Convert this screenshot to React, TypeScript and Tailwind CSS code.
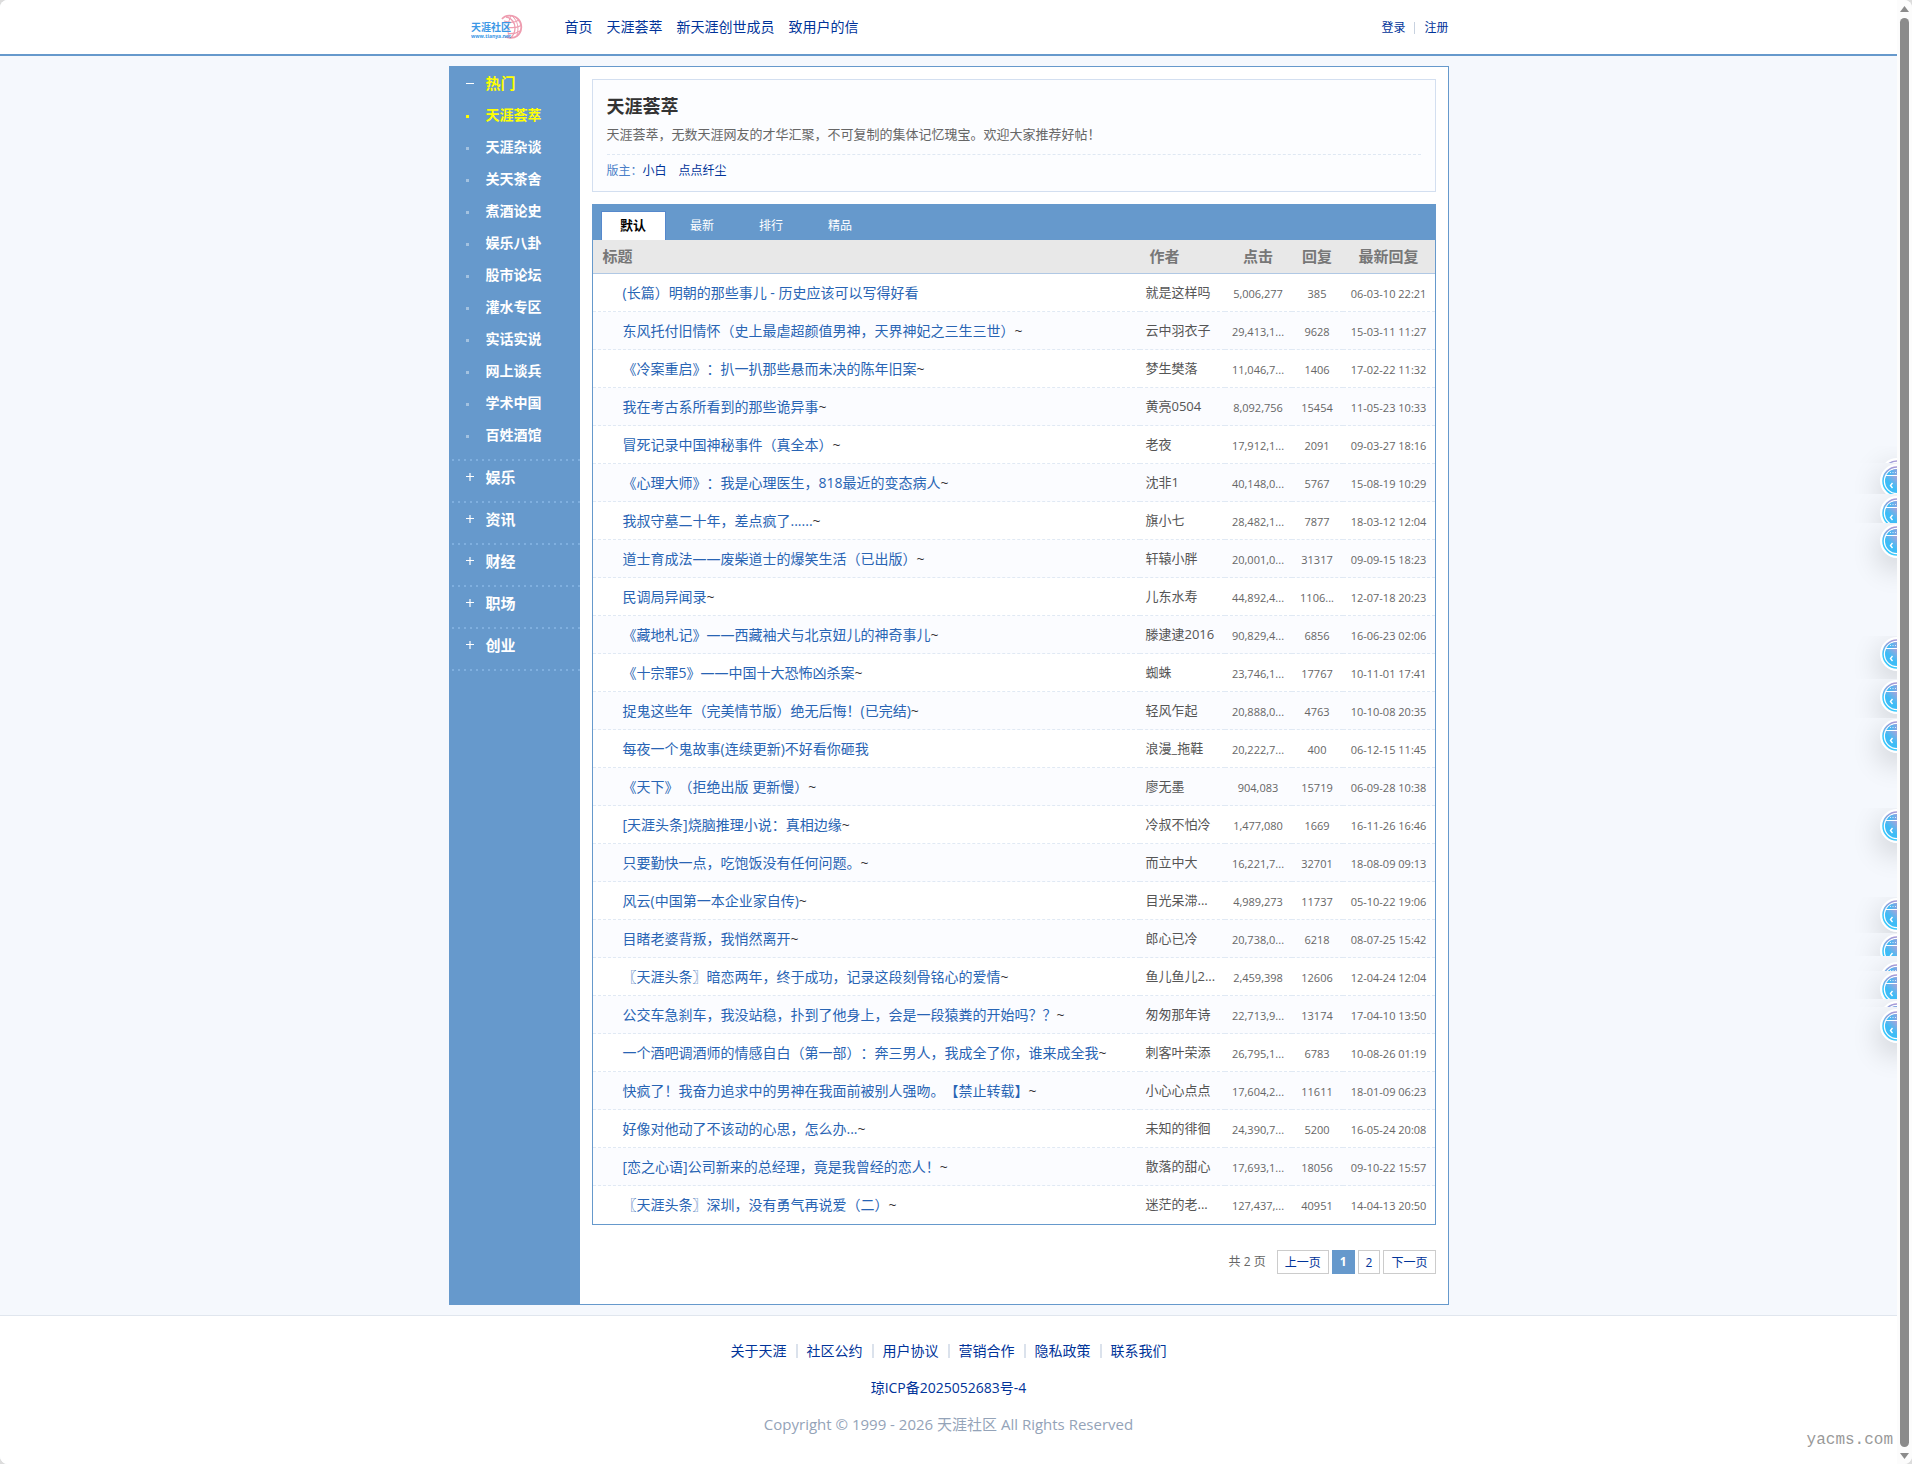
import clsx from "clsx";

interface Topic {
  title: string;
  author: string;
  clicks: string;
  replies: string;
  date: string;
  original?: boolean;
}

const NAV_LINKS = ["首页", "天涯荟萃", "新天涯创世成员", "致用户的信"];

const HOT_BOARDS = [
  "天涯荟萃",
  "天涯杂谈",
  "关天茶舍",
  "煮酒论史",
  "娱乐八卦",
  "股市论坛",
  "灌水专区",
  "实话实说",
  "网上谈兵",
  "学术中国",
  "百姓酒馆",
];

const CLOSED_GROUPS = ["娱乐", "资讯", "财经", "职场", "创业"];

const TABS = ["默认", "最新", "排行", "精品"];

const FOOTER_LINKS = [
  "关于天涯",
  "社区公约",
  "用户协议",
  "营销合作",
  "隐私政策",
  "联系我们",
];

// Titles flagged as original have no tilde after the link
const TOPICS: Topic[] = [
  { title: "(长篇）明朝的那些事儿 - 历史应该可以写得好看", author: "就是这样吗", clicks: "5,006,277", replies: "385", date: "06-03-10 22:21", original: true },
  { title: "东风托付旧情怀（史上最虐超颜值男神，天界神妃之三生三世）", author: "云中羽衣子", clicks: "29,413,1...", replies: "9628", date: "15-03-11 11:27" },
  { title: "《冷案重启》：扒一扒那些悬而未决的陈年旧案", author: "梦生樊落", clicks: "11,046,7...", replies: "1406", date: "17-02-22 11:32" },
  { title: "我在考古系所看到的那些诡异事", author: "黄亮0504", clicks: "8,092,756", replies: "15454", date: "11-05-23 10:33" },
  { title: "冒死记录中国神秘事件（真全本）", author: "老夜", clicks: "17,912,1...", replies: "2091", date: "09-03-27 18:16" },
  { title: "《心理大师》：我是心理医生，818最近的变态病人", author: "沈非1", clicks: "40,148,0...", replies: "5767", date: "15-08-19 10:29" },
  { title: "我叔守墓二十年，差点疯了......", author: "旗小七", clicks: "28,482,1...", replies: "7877", date: "18-03-12 12:04" },
  { title: "道士育成法——废柴道士的爆笑生活（已出版）", author: "轩辕小胖", clicks: "20,001,0...", replies: "31317", date: "09-09-15 18:23" },
  { title: "民调局异闻录", author: "儿东水寿", clicks: "44,892,4...", replies: "1106...", date: "12-07-18 20:23" },
  { title: "《藏地札记》——西藏袖犬与北京妞儿的神奇事儿", author: "滕逮逮2016", clicks: "90,829,4...", replies: "6856", date: "16-06-23 02:06" },
  { title: "《十宗罪5》——中国十大恐怖凶杀案", author: "蜘蛛", clicks: "23,746,1...", replies: "17767", date: "10-11-01 17:41" },
  { title: "捉鬼这些年（完美情节版）绝无后悔！(已完结)", author: "轻风乍起", clicks: "20,888,0...", replies: "4763", date: "10-10-08 20:35" },
  { title: "每夜一个鬼故事(连续更新)不好看你砸我", author: "浪漫_拖鞋", clicks: "20,222,7...", replies: "400", date: "06-12-15 11:45", original: true },
  { title: "《天下》（拒绝出版 更新慢）", author: "廖无墨", clicks: "904,083", replies: "15719", date: "06-09-28 10:38" },
  { title: "[天涯头条]烧脑推理小说：真相边缘", author: "冷叔不怕冷", clicks: "1,477,080", replies: "1669", date: "16-11-26 16:46" },
  { title: "只要勤快一点，吃饱饭没有任何问题。", author: "而立中大", clicks: "16,221,7...", replies: "32701", date: "18-08-09 09:13" },
  { title: "风云(中国第一本企业家自传)", author: "目光呆滞...", clicks: "4,989,273", replies: "11737", date: "05-10-22 19:06" },
  { title: "目睹老婆背叛，我悄然离开", author: "郎心已冷", clicks: "20,738,0...", replies: "6218", date: "08-07-25 15:42" },
  { title: "〖天涯头条〗暗恋两年，终于成功，记录这段刻骨铭心的爱情", author: "鱼儿鱼儿2...", clicks: "2,459,398", replies: "12606", date: "12-04-24 12:04" },
  { title: "公交车急刹车，我没站稳，扑到了他身上，会是一段猿粪的开始吗？？", author: "匆匆那年诗", clicks: "22,713,9...", replies: "13174", date: "17-04-10 13:50" },
  { title: "一个酒吧调酒师的情感自白（第一部）：奔三男人，我成全了你，谁来成全我", author: "刺客叶荣添", clicks: "26,795,1...", replies: "6783", date: "10-08-26 01:19" },
  { title: "快疯了！我奋力追求中的男神在我面前被别人强吻。【禁止转载】", author: "小心心点点", clicks: "17,604,2...", replies: "11611", date: "18-01-09 06:23" },
  { title: "好像对他动了不该动的心思，怎么办...", author: "未知的徘徊", clicks: "24,390,7...", replies: "5200", date: "16-05-24 20:08" },
  { title: "[恋之心语]公司新来的总经理，竟是我曾经的恋人！", author: "散落的甜心", clicks: "17,693,1...", replies: "18056", date: "09-10-22 15:57" },
  { title: "〖天涯头条〗深圳，没有勇气再说爱（二）", author: "迷茫的老...", clicks: "127,437,...", replies: "40951", date: "14-04-13 20:50" },
];

// top / height: visible slice of the badge, offset: where the circle starts in it
const BADGES = [
  { top: 446, height: 17, offset: 12 },
  { top: 463, height: 31, offset: 1 },
  { top: 494, height: 29, offset: 2 },
  { top: 523, height: 90, offset: 1 },
  { top: 636, height: 43, offset: 1 },
  { top: 679, height: 39, offset: 1 },
  { top: 718, height: 90, offset: 1 },
  { top: 808, height: 89, offset: 1 },
  { top: 897, height: 36, offset: 1 },
  { top: 933, height: 23, offset: 1 },
  { top: 956, height: 15, offset: 6 },
  { top: 971, height: 28, offset: 1 },
  { top: 999, height: 8, offset: 2 },
  { top: 1007, height: 90, offset: 2 },
];

const Logo = () => (
  <svg width="52" height="26" viewBox="0 0 52 26" role="img" aria-label="天涯社区">
    <g fill="none" stroke="#ee9db0">
      <path d="M31 5C34 1 42 0 47 5C52 10 51 18 46 22C43 24.500 38 24 34 23" strokeWidth="1.800" />
      <path d="M35 3C41 4 44 9 44 14C44 18 42 22 39 24" strokeWidth="1.300" />
      <path d="M41 2C47 7 48 14 46 21" strokeWidth="1" />
      <path d="M33 7C39 9 45 8 48 6" strokeWidth="1.200" />
      <path d="M38 13.500C43 14 47 13.500 50 11.500" strokeWidth="1.200" />
      <path d="M37 19.500C42 20 46 19 49 17" strokeWidth="1.200" />
      <path d="M40 1.500C37 8 36 16 38 23" strokeWidth="1" />
    </g>
    <text x="0" y="17" fontSize="10" fontWeight="700" fill="#3b98e6">
      天涯社区
    </text>
    <text x="0" y="24" fontSize="5" fontWeight="700" fill="#3b98e6">
      www.tianya.net
    </text>
  </svg>
);

const BadgeIcon = () => (
  <svg width="34" height="34" viewBox="0 0 34 34" className="rounded-full shadow-[0_10px_30px_rgba(0,0,0,0.2)]">
    <defs>
      <linearGradient id="badge-fill" x1="0" y1="1" x2="1" y2="0">
        <stop offset="0.300" stopColor="#3dbcf6" />
        <stop offset="0.700" stopColor="#cf9bd0" />
      </linearGradient>
      <linearGradient id="badge-top" x1="0" y1="0" x2="1" y2="0">
        <stop offset="0.100" stopColor="#3dbcf6" />
        <stop offset="0.600" stopColor="#9a9fdc" />
      </linearGradient>
      <linearGradient id="badge-ring" x1="0" y1="1" x2="0" y2="0">
        <stop offset="0.500" stopColor="#3cc8fb" />
        <stop offset="1" stopColor="#a99ad6" />
      </linearGradient>
    </defs>
    <circle cx="17" cy="17" r="17" fill="#fff" />
    <circle cx="17" cy="17" r="14" fill="none" stroke="url(#badge-ring)" strokeWidth="1.500" />
    <circle cx="17" cy="17" r="12" fill="url(#badge-fill)" />
    <path d="M6.400 11.500A12 12 0 0 1 27.600 11.500Z" fill="url(#badge-top)" />
    <path d="M6 11.500H28" stroke="#fff" strokeWidth="1.200" />
    <path d="M10 8.500h1M12.500 8.500h1M15 8.500h1" stroke="#d7ecfb" />
    <path d="M12.500 19L10.500 21.500L12.500 24" fill="none" stroke="#fff" strokeWidth="1.400" />
  </svg>
);

const Header = () => (
  <header className="border-b-2 border-[#6699cc] bg-white">
    <div className="mx-auto flex h-[54px] max-w-[1000px] items-center">
      <a href="#home" className="ml-[22px]">
        <Logo />
      </a>
      <nav className="ml-[42px] flex gap-[14px] text-sm">
        {NAV_LINKS.map((link) => (
          <a key={link} href="#nav">
            {link}
          </a>
        ))}
      </nav>
      <div className="ml-auto flex items-center gap-[9px] pt-[2px] text-xs">
        <a href="#login">登录</a>
        <span className="h-3 w-px bg-[#c8d2e0]" />
        <a href="#register">注册</a>
      </div>
    </div>
  </header>
);

const DottedLine = () => (
  <div className="mt-2 ml-[2px] h-[2px] bg-[linear-gradient(90deg,#7fafdf_2px,transparent_2px)] bg-[length:6px_2px]" />
);

const Sidebar = () => (
  <aside className="w-[130px] shrink-0 bg-[#6699cc] font-bold text-white">
    <button className="flex h-8 w-full items-center pl-4 text-[15px] text-[#ffff00]">
      <span className="mr-3 h-px w-2 bg-white" />
      热门
    </button>
    <ul>
      {HOT_BOARDS.map((board, i) => (
        <li key={board}>
          <a
            href="#board"
            className={clsx(
              "flex h-8 items-center pl-4 text-sm",
              i === 0 ? "text-[#ffff00]" : "text-white"
            )}
          >
            <span
              className={clsx(
                "mt-[3px] mr-[17px] size-[3px]",
                i === 0 ? "bg-[#ffff00]" : "bg-[#a3c2e0]"
              )}
            />
            {board}
          </a>
        </li>
      ))}
    </ul>
    <DottedLine />
    {CLOSED_GROUPS.map((group) => (
      <div key={group}>
        <button className="flex h-8 w-full items-center pl-4 text-[15px]">
          <svg width="8" height="8" viewBox="0 0 8 8" className="mr-3">
            <path d="M0 3.500H8M4 0V8" stroke="#fff" strokeWidth="1.200" />
          </svg>
          {group}
        </button>
        <DottedLine />
      </div>
    ))}
  </aside>
);

const BoardInfo = () => (
  <section className="border border-[#d3dff0] bg-[#fcfdff] px-[14px] pt-3 pb-2">
    <h1 className="text-lg leading-7 font-bold text-[#333]">天涯荟萃</h1>
    <p className="mt-[2px] border-b border-dashed border-[#dfe8f3] pb-2 text-[13px] leading-6 text-[#666]">
      天涯荟萃，无数天涯网友的才华汇聚，不可复制的集体记忆瑰宝。欢迎大家推荐好帖！
    </p>
    <div className="mt-1 flex text-xs leading-6">
      <span className="text-[#4a7fc8]">版主：</span>
      <a href="#moderator" className="mr-3">
        小白
      </a>
      <a href="#moderator">点点纤尘</a>
    </div>
  </section>
);

const TopicRow = ({ topic, isLast }: { topic: Topic; isLast: boolean }) => {
  const cell = clsx(
    "p-0 font-normal",
    !isLast && "border-b border-dashed border-[#e0e9f4]"
  );

  return (
    <tr className="h-[38px] text-center text-[11px] text-[#666] even:bg-[#fbfcff]">
      <td className={clsx(cell, "truncate text-left text-sm text-[#333]")}>
        <a href="#topic" className="ml-[30px] text-[#2864b4]">
          {topic.title}
        </a>
        {!topic.original && "~"}
      </td>
      <td className={clsx(cell, "text-left text-[13px] whitespace-nowrap text-[#555]")}>
        <span className="ml-[6px]">{topic.author}</span>
      </td>
      <td className={clsx(cell, "pt-[3px]")}>{topic.clicks}</td>
      <td className={clsx(cell, "pt-[3px]")}>{topic.replies}</td>
      <td className={clsx(cell, "pt-[3px] whitespace-nowrap")}>{topic.date}</td>
    </tr>
  );
};

const TopicList = () => (
  <section className="mt-3 border border-[#6699cc]">
    <div className="flex gap-1 bg-[#6699cc] px-2 pt-[6px]">
      {TABS.map((tab, i) => (
        <button
          key={tab}
          className={clsx(
            "h-[29px] w-[65px] text-center",
            i === 0
              ? "border border-b-0 border-[#5588cc] bg-white text-[13px] font-bold text-black"
              : "text-xs text-white"
          )}
        >
          {tab}
        </button>
      ))}
    </div>
    <table className="w-full table-fixed border-separate border-spacing-0">
      <colgroup>
        <col />
        <col className="w-[85px]" />
        <col className="w-[67px]" />
        <col className="w-[51px]" />
        <col className="w-[92px]" />
      </colgroup>
      <thead>
        <tr className="h-[34px] bg-[#e8e8e8] text-[15px] text-[#777]">
          <th className="border-b border-[#b0c8e4] p-0 pl-[10px] text-left">标题</th>
          <th className="border-b border-[#b0c8e4] p-0 pl-[10px] text-left">作者</th>
          <th className="border-b border-[#b0c8e4] p-0">点击</th>
          <th className="border-b border-[#b0c8e4] p-0">回复</th>
          <th className="border-b border-[#b0c8e4] p-0">最新回复</th>
        </tr>
      </thead>
      <tbody>
        {TOPICS.map((topic, i) => (
          <TopicRow
            key={topic.title}
            topic={topic}
            isLast={i === TOPICS.length - 1}
          />
        ))}
      </tbody>
    </table>
  </section>
);

const Pagination = () => (
  <nav className="mt-[25px] flex h-6 items-stretch justify-end gap-[3px] text-xs leading-6">
    <span className="mr-2 text-[#666]">共 2 页</span>
    <a href="#prev" className="border border-[#ccc] px-[7px]">
      上一页
    </a>
    <a href="#1" className="bg-[#6699cc] px-2 font-bold text-white">
      1
    </a>
    <a href="#2" className="border border-[#ccc] px-[7px]">
      2
    </a>
    <a href="#next" className="border border-[#ccc] px-[7px]">
      下一页
    </a>
  </nav>
);

const Footer = () => (
  <footer className="flex flex-1 flex-col items-center gap-4 border-t border-[#e0e6ee] bg-white pt-6 text-sm leading-[21px]">
    <div className="flex items-center">
      {FOOTER_LINKS.map((link, i) => (
        <a key={link} href="#footer" className="flex items-center">
          {i > 0 && <span className="mx-[9px] h-[14px] w-[2px] bg-[#dbe2ec]" />}
          {link}
        </a>
      ))}
    </div>
    <a href="#icp">琼ICP备2025052683号-4</a>
    <p className="text-[15px] text-[#94a3b8]">
      Copyright © 1999 - 2026 天涯社区 All Rights Reserved
    </p>
  </footer>
);

const ScrollTrack = () => (
  <div className="flex w-[15px] shrink-0 flex-col items-center gap-[6px] bg-[#fcfcfc] pt-[6px] pb-[5px]">
    <svg width="9" height="6" viewBox="0 0 9 6">
      <path d="M4.500 0L9 6H0Z" fill="#8b8b8b" />
    </svg>
    <div className="w-[9px] flex-1 rounded-full bg-[#8b8b8b]" />
    <svg width="9" height="6" viewBox="0 0 9 6">
      <path d="M4.500 6L9 0H0Z" fill="#8b8b8b" />
    </svg>
  </div>
);

const App = () => {
  return (
    <div className="bg-[#dcdcdc]">
      <div className="flex min-h-screen overflow-hidden rounded-lg bg-white font-['Open_Sans','Noto_Sans_CJK_SC',sans-serif] text-[#003399] [text-spacing-trim:space-all]">
        <div className="relative flex min-w-0 flex-1 flex-col bg-[#f5f8fd]">
          <Header />
          <main className="mx-auto my-[10px] flex w-full max-w-[1000px] border border-[#6699cc] bg-white">
            <Sidebar />
            <div className="min-w-0 flex-1 px-3 pt-3 pb-[30px]">
              <BoardInfo />
              <TopicList />
              <Pagination />
            </div>
          </main>
          <Footer />

          {/* Floating badges, half hidden by the window edge */}
          {BADGES.map((badge) => (
            <div
              key={badge.top}
              className="absolute right-0 w-[50px] overflow-hidden"
              style={{ top: badge.top, height: badge.height }}
            >
              <div className="ml-[33px]" style={{ paddingTop: badge.offset }}>
                <BadgeIcon />
              </div>
            </div>
          ))}

          <span className="absolute right-1 bottom-3 font-['Liberation_Mono',monospace] text-base text-[#999]">
            yacms.com
          </span>
        </div>
        <ScrollTrack />
      </div>
    </div>
  );
};

export default App;
